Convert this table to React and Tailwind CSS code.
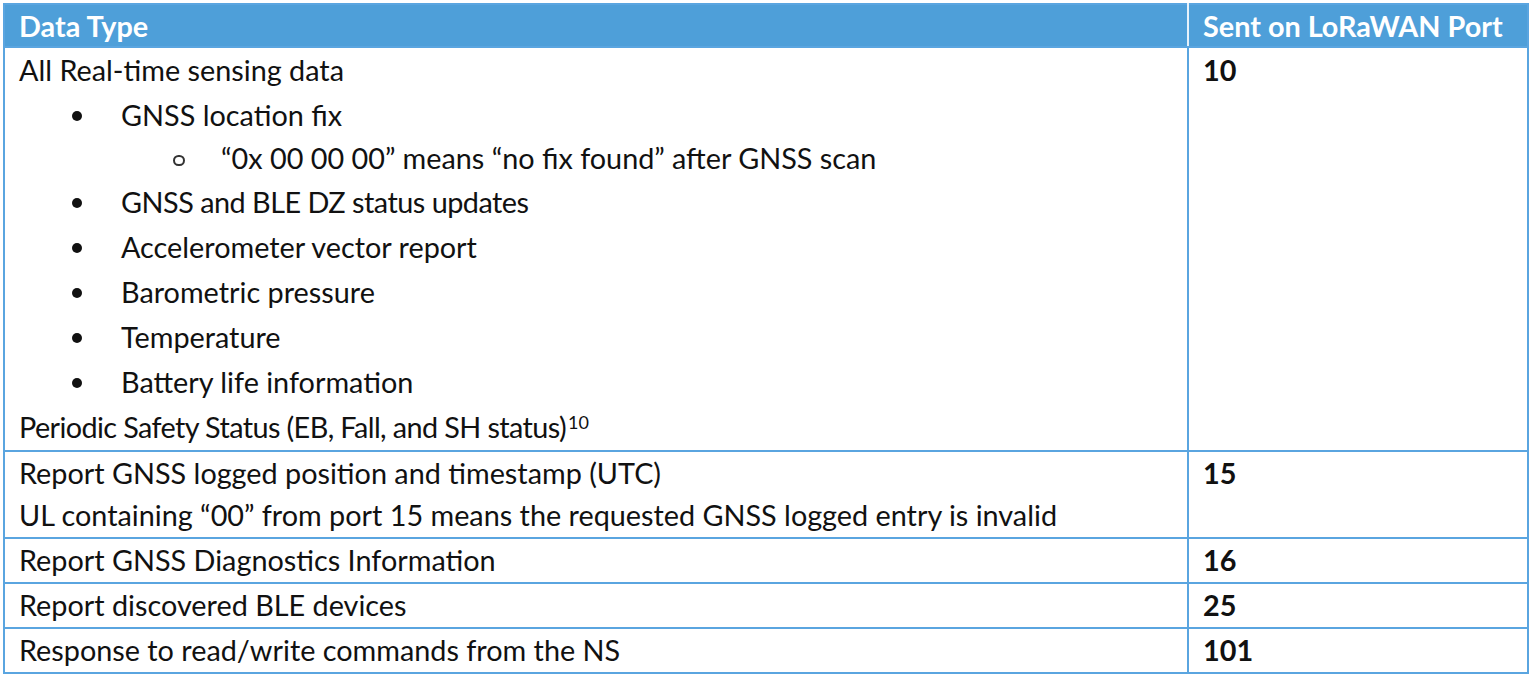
const rows = [
  {
    port: "10",
    lines: [
      { text: "All Real-time sensing data" },
      { text: "GNSS location fix", level: 1 },
      { text: "“0x 00 00 00” means “no fix found” after GNSS scan", level: 2 },
      { text: "GNSS and BLE DZ status updates", level: 1, track: "tracking-[-0.5px]" },
      { text: "Accelerometer vector report", level: 1 },
      { text: "Barometric pressure", level: 1 },
      { text: "Temperature", level: 1 },
      { text: "Battery life information", level: 1 },
      { text: "Periodic Safety Status (EB, Fall, and SH status)", sup: "10", track: "tracking-[-0.6px]" },
    ],
  },
  {
    port: "15",
    lines: [
      { text: "Report GNSS logged position and timestamp (UTC)" },
      { text: "UL containing “00” from port 15 means the requested GNSS logged entry is invalid" },
    ],
    tight: true,
  },
  { port: "16", lines: [{ text: "Report GNSS Diagnostics Information" }] },
  { port: "25", lines: [{ text: "Report discovered BLE devices" }] },
  { port: "101", lines: [{ text: "Response to read/write commands from the NS" }] },
];

// row heights tuned to the reference line pitch (~45px per line)
function Line({ line, h }) {
  if (line.level === 1) {
    return (
      <div className="flex h-[45px] items-center">
        <span className="w-[102px] pl-[53px]">
          <span className="block w-[10px] h-[10px] rounded-full bg-[#111]" />
        </span>
        <span className={line.track}>{line.text}</span>
      </div>
    );
  }
  if (line.level === 2) {
    return (
      <div className="flex h-[42px] items-center">
        <span className="w-[202px] pl-[154px]">
          <span className="block w-[12px] h-[11px] mt-[3px] rounded-full border-2 border-[#333]" />
        </span>
        <span>{line.text}</span>
      </div>
    );
  }
  return (
    <div className={`flex items-center ${h}`}>
      <span className={line.track}>
        {line.text}
        {line.sup && <sup className="text-[18px] ml-[2px] tracking-normal">{line.sup}</sup>}
      </span>
    </div>
  );
}

export default function App() {
  return (
    <div className="bg-white w-[1533px] h-[679px] pt-[3px] pl-[3px]">
      <table
        className="w-[1526px] border-collapse text-[28.8px] text-[#111]"
        style={{ fontFamily: "Lato, 'Open Sans', sans-serif" }}
      >
        <thead>
          <tr className="bg-[#4e9fd9] text-white">
            <th className="h-[43px] leading-[38px] w-[1184px] border-2 border-[#5aa5e0] border-r-[#e6f1fa] px-[14px] text-left font-bold">
              Data Type
            </th>
            <th className="h-[43px] leading-[38px] border-2 border-[#5aa5e0] px-[14px] text-left font-bold">
              Sent on LoRaWAN Port
            </th>
          </tr>
        </thead>
        <tbody>
          {rows.map((r) => {
            const h = r.tight ? "h-[42.5px]" : r.lines.length === 1 ? "h-[43px]" : "h-[45px]";
            return (
              <tr key={r.port}>
                <td className="border-2 border-[#5aa5e0] px-[14px] align-top">
                  {r.lines.map((l, i) => (
                    <Line key={i} line={l} h={h} />
                  ))}
                </td>
                <td className="border-2 border-[#5aa5e0] px-[14px] align-top">
                  <div className={`flex items-center font-bold ${h}`}>{r.port}</div>
                </td>
              </tr>
            );
          })}
        </tbody>
      </table>
    </div>
  );
}
